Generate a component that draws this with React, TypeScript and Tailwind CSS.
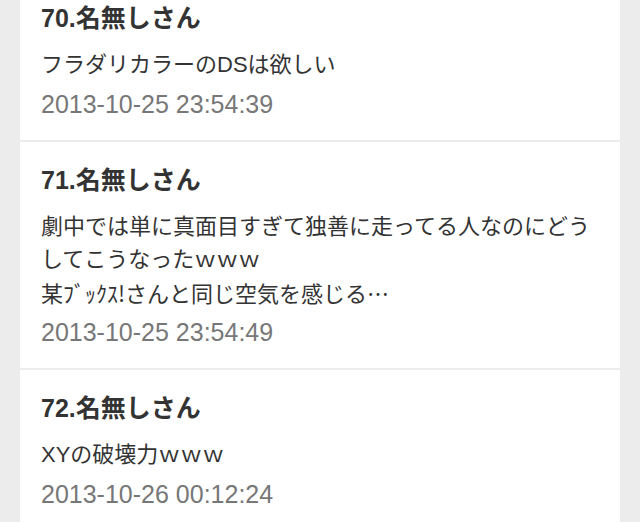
import React from "react";

const cjk = { fontFamily: '"Noto Sans CJK JP", sans-serif' };

const items: { no: number; lines: { t: string; cjk?: boolean }[]; date: string }[] = [
  {
    no: 70,
    lines: [{ t: "フラダリカラーのDSは欲しい" }],
    date: "2013-10-25 23:54:39",
  },
  {
    no: 71,
    lines: [
      { t: "劇中では単に真面目すぎて独善に走ってる人なのにどうしてこうなったｗｗｗ" },
      { t: "某ﾌﾞｯｸｽ!さんと同じ空気を感じる…", cjk: true },
    ],
    date: "2013-10-25 23:54:49",
  },
  {
    no: 72,
    lines: [{ t: "XYの破壊力ｗｗｗ" }],
    date: "2013-10-26 00:12:24",
  },
];

export default function App() {
  return (
    <div className="w-[640px] h-[522px] overflow-hidden bg-[#ececec]">
      <div
        className="mx-[20px] mt-[-20px] bg-white"
        style={{ fontFamily: '"Liberation Sans", "Noto Sans CJK JP", sans-serif' }}
      >
        {items.map((it, i) => (
          <div
            key={it.no}
            className={
              "px-[21px] pt-[22px] pb-[20px] " +
              (i > 0 ? "border-t-2 border-[#ececec]" : "")
            }
          >
            <div className="text-[25px] leading-[32px] font-bold text-[#333]">
              {it.no}.名無しさん
            </div>
            <div className="mt-[14px] text-[22px] leading-[33px] text-[#333]">
              {it.lines.map((l, j) => (
                <div key={j} style={l.cjk ? cjk : undefined}>
                  {l.t}
                </div>
              ))}
            </div>
            <div className="mt-[7px] text-[25px] leading-[32px] text-[#777]">
              {it.date}
            </div>
          </div>
        ))}
      </div>
    </div>
  );
}
